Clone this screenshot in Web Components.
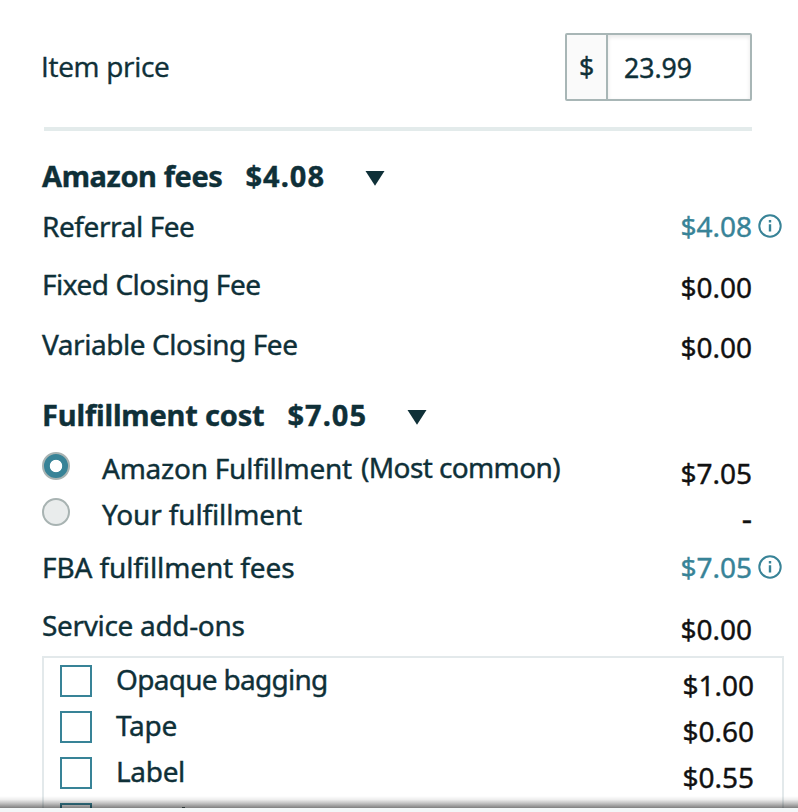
<!DOCTYPE html>
<html lang="en">
<head>
<meta charset="utf-8">
<title>Fees</title>
<style>
    body {
        margin: 0;
        background: #fff;
        overflow: hidden;
    }
</style>
</head>
<body>
<fee-calculator></fee-calculator>

<script>
// Text tracked out (or in) so that it takes up the given width
class FitText extends HTMLElement {

    constructor() {
        super();
        this.shadowDOM = this.attachShadow({mode: "open"});
    }

    connectedCallback() {
        this.shadowDOM.innerHTML = `
        <style>
        :host { display: inline-block; white-space: nowrap; }
        span { display: block; width: max-content; }
        </style>
        <span><slot></slot></span>`;
        const span = this.shadowDOM.querySelector("span");
        const count = this.textContent.length;
        const natural = span.getBoundingClientRect().width;
        span.style.letterSpacing = (Number(this.getAttribute("width")) - natural) / count + "px";
    }
}

class InfoIcon extends HTMLElement {

    constructor() {
        super();
        this.shadowDOM = this.attachShadow({mode: "open"});
    }

    connectedCallback() {
        this.shadowDOM.innerHTML = `
        <style>
        :host { display: block; width: 24px; height: 24px; }
        svg { display: block; }
        </style>
        <svg width="24" height="24" viewBox="0 0 24 24" fill="none" stroke="currentColor">
            <circle cx="12" cy="12" r="10.7" stroke-width="2"/>
            <path d="M12 10.2V17.6M12 6V8.4" stroke-width="2.4"/>
        </svg>`;
    }
}

class PriceInput extends HTMLElement {

    constructor() {
        super();
        this.shadowDOM = this.attachShadow({mode: "open"});
    }

    connectedCallback() {
        this.shadowDOM.innerHTML = `
        <style>
        :host {
            display: flex;
            box-sizing: border-box;
            width: 187px;
            height: 68px;
            border: 2px solid #a8b6b6;
            border-radius: 2px;
            font-size: 26.6px;
            line-height: 40px;
        }
        .prefix {
            width: 39px;
            padding-top: 12px;
            border-right: 2px solid #a8b6b6;
            background: #fafafa;
            text-align: center;
        }
        .value {
            flex: 1;
            padding: 13px 0 0 16px;
            box-shadow: inset 0 2px 4px rgba(15, 17, 17, 0.1);
        }
        </style>
        <div class="prefix">$</div>
        <div class="value"><slot></slot></div>`;
    }
}

class FeeHeading extends HTMLElement {

    constructor() {
        super();
        this.shadowDOM = this.attachShadow({mode: "open"});
    }

    connectedCallback() {
        this.shadowDOM.innerHTML = `
        <style>
        :host {
            display: flex;
            height: 51px;
            font-weight: 700;
            font-size: 29px;
            line-height: 42px;
        }
        .amount { margin-left: 23px; }
        svg { display: block; margin: 16px 0 0 39.5px; }
        </style>
        <slot></slot>
        <fit-text class="amount" width="79.5">${this.getAttribute("amount")}</fit-text>
        <svg width="20" height="15" viewBox="0 0 20 15"><path d="M0.5 0H19.5L10 14.8Z" fill="currentColor"/></svg>`;
    }
}

class FeeRow extends HTMLElement {

    constructor() {
        super();
        this.shadowDOM = this.attachShadow({mode: "open"});
    }

    connectedCallback() {
        const info = this.hasAttribute("info");
        this.shadowDOM.innerHTML = `
        <style>
        :host {
            display: flex;
            align-items: flex-start;
            line-height: 40px;
        }
        .label { flex: 1; display: flex; align-items: flex-start; }
        .amount { padding-top: var(--drop, 0px); color: #111; }
        :host([info]) .amount, info-icon { color: #388397; }
        :host([amount="-"]) .amount { font-size: 32px; }
        info-icon { margin: 8px -30px 0 6px; }
        </style>
        <div class="label"><slot></slot></div>
        <div class="amount">${this.getAttribute("amount") || ""}</div>
        ${info ? "<info-icon></info-icon>" : ""}`;
    }
}

class RadioMark extends HTMLElement {

    constructor() {
        super();
        this.shadowDOM = this.attachShadow({mode: "open"});
    }

    connectedCallback() {
        this.shadowDOM.innerHTML = `
        <style>
        :host {
            display: block;
            box-sizing: border-box;
            width: 28px;
            height: 28px;
            margin: 4px 32px 0 0;
            border: 2px solid #a8b3b2;
            border-radius: 50%;
            background: #e9ecec;
        }
        :host([checked]) {
            background: radial-gradient(circle, #fff 5.8px, #388397 6.6px);
        }
        </style>`;
    }
}

class CheckMark extends HTMLElement {

    constructor() {
        super();
        this.shadowDOM = this.attachShadow({mode: "open"});
    }

    connectedCallback() {
        this.shadowDOM.innerHTML = `
        <style>
        :host {
            display: block;
            box-sizing: border-box;
            width: 32px;
            height: 32px;
            margin: 6px 24px 0 0;
            border: 2px solid #388397;
            background: #fff;
        }
        </style>`;
    }
}

class FeeCalculator extends HTMLElement {

    constructor() {
        super();
        this.shadowDOM = this.attachShadow({mode: "open"});
    }

    connectedCallback() {
        this.shadowDOM.innerHTML = `
        <style>
        :host {
            display: flex;
            flex-direction: column;
            position: relative;
            box-sizing: border-box;
            width: 798px;
            height: 812px;
            overflow: hidden;
            color: #0f3038;
            font-family: "Noto Sans", "Open Sans", sans-serif;
            font-size: 28px;
            -webkit-text-stroke: 0.4px;
        }
        main {
            flex: 1;
            min-height: 0;
            overflow: hidden;
            padding: 33px 46px 0 42px;
        }
        .price {
            display: flex;
            justify-content: space-between;
            height: 94px;
            line-height: 40px;
        }
        .price > fit-text { margin-left: -1px; padding-top: 13px; font-family: "Open Sans", sans-serif; }
        hr {
            height: 4px;
            margin: 0 0 24px 2px;
            border: 0;
            background: #e3ebeb;
        }
        .addons {
            height: 200px;
            margin: 0 -32px 0 0;
            padding: 1px 28px 0 16px;
            border: 2px solid #e3e9eb;
        }
        .addons fee-row { height: 46px; --drop: 6px; }
        .footer {
            position: relative;
            height: 4px;
            background: #f3f7f8;
        }
        .footer::before {
            content: "";
            position: absolute;
            left: 0;
            right: 0;
            bottom: 4px;
            height: 12px;
            background: linear-gradient(rgba(0, 0, 0, 0), rgba(0, 0, 0, 0.07) 30%, rgba(0, 0, 0, 0.25) 62%, rgba(0, 0, 0, 0.5));
        }
        .tip { width: 3px; height: 1px; margin: 10px 0 0 66px; background: #566; }
        </style>
        <main>
            <div class="price">
                <fit-text width="128.5">Item price</fit-text>
                <price-input><fit-text width="68">23.99</fit-text></price-input>
            </div>
            <hr>
            <fee-heading amount="$4.08"><fit-text width="180.5">Amazon fees</fit-text></fee-heading>
            <fee-row style="height: 58px" amount="$4.08" info><fit-text width="152.5">Referral Fee</fit-text></fee-row>
            <fee-row style="height: 60px; --drop: 3px" amount="$0.00"><fit-text width="218.5">Fixed Closing Fee</fit-text></fee-row>
            <fee-row style="height: 70px; --drop: 3px" amount="$0.00"><fit-text width="255.5">Variable Closing Fee</fit-text></fee-row>
            <fee-heading style="height: 54px" amount="$7.05"><fit-text width="222.5">Fulfillment cost</fit-text></fee-heading>
            <fee-row style="height: 46px; --drop: 5px" amount="$7.05"><radio-mark checked></radio-mark><fit-text width="250">Amazon Fulfillment</fit-text><fit-text style="margin: -1px 0 0 9px" width="199">(Most common)</fit-text></fee-row>
            <fee-row style="height: 53px; --drop: 5px" amount="-"><radio-mark></radio-mark><fit-text width="200">Your fulfillment</fit-text></fee-row>
            <fee-row style="height: 58px" amount="$7.05" info><fit-text width="252.5">FBA fulfillment fees</fit-text></fee-row>
            <fee-row style="height: 51px; --drop: 4px" amount="$0.00"><fit-text width="202.5">Service add-ons</fit-text></fee-row>
            <div class="addons">
                <fee-row amount="$1.00"><check-mark></check-mark><fit-text width="211.5">Opaque bagging</fit-text></fee-row>
                <fee-row amount="$0.60"><check-mark></check-mark><fit-text width="61">Tape</fit-text></fee-row>
                <fee-row amount="$0.55"><check-mark></check-mark><fit-text width="69">Label</fit-text></fee-row>
                <fee-row><check-mark></check-mark><div class="tip"></div></fee-row>
            </div>
        </main>
        <div class="footer"></div>`;
    }
}

customElements.define("fit-text", FitText);
customElements.define("info-icon", InfoIcon);
customElements.define("price-input", PriceInput);
customElements.define("fee-heading", FeeHeading);
customElements.define("fee-row", FeeRow);
customElements.define("radio-mark", RadioMark);
customElements.define("check-mark", CheckMark);
customElements.define("fee-calculator", FeeCalculator);
</script>
</body>
</html>
